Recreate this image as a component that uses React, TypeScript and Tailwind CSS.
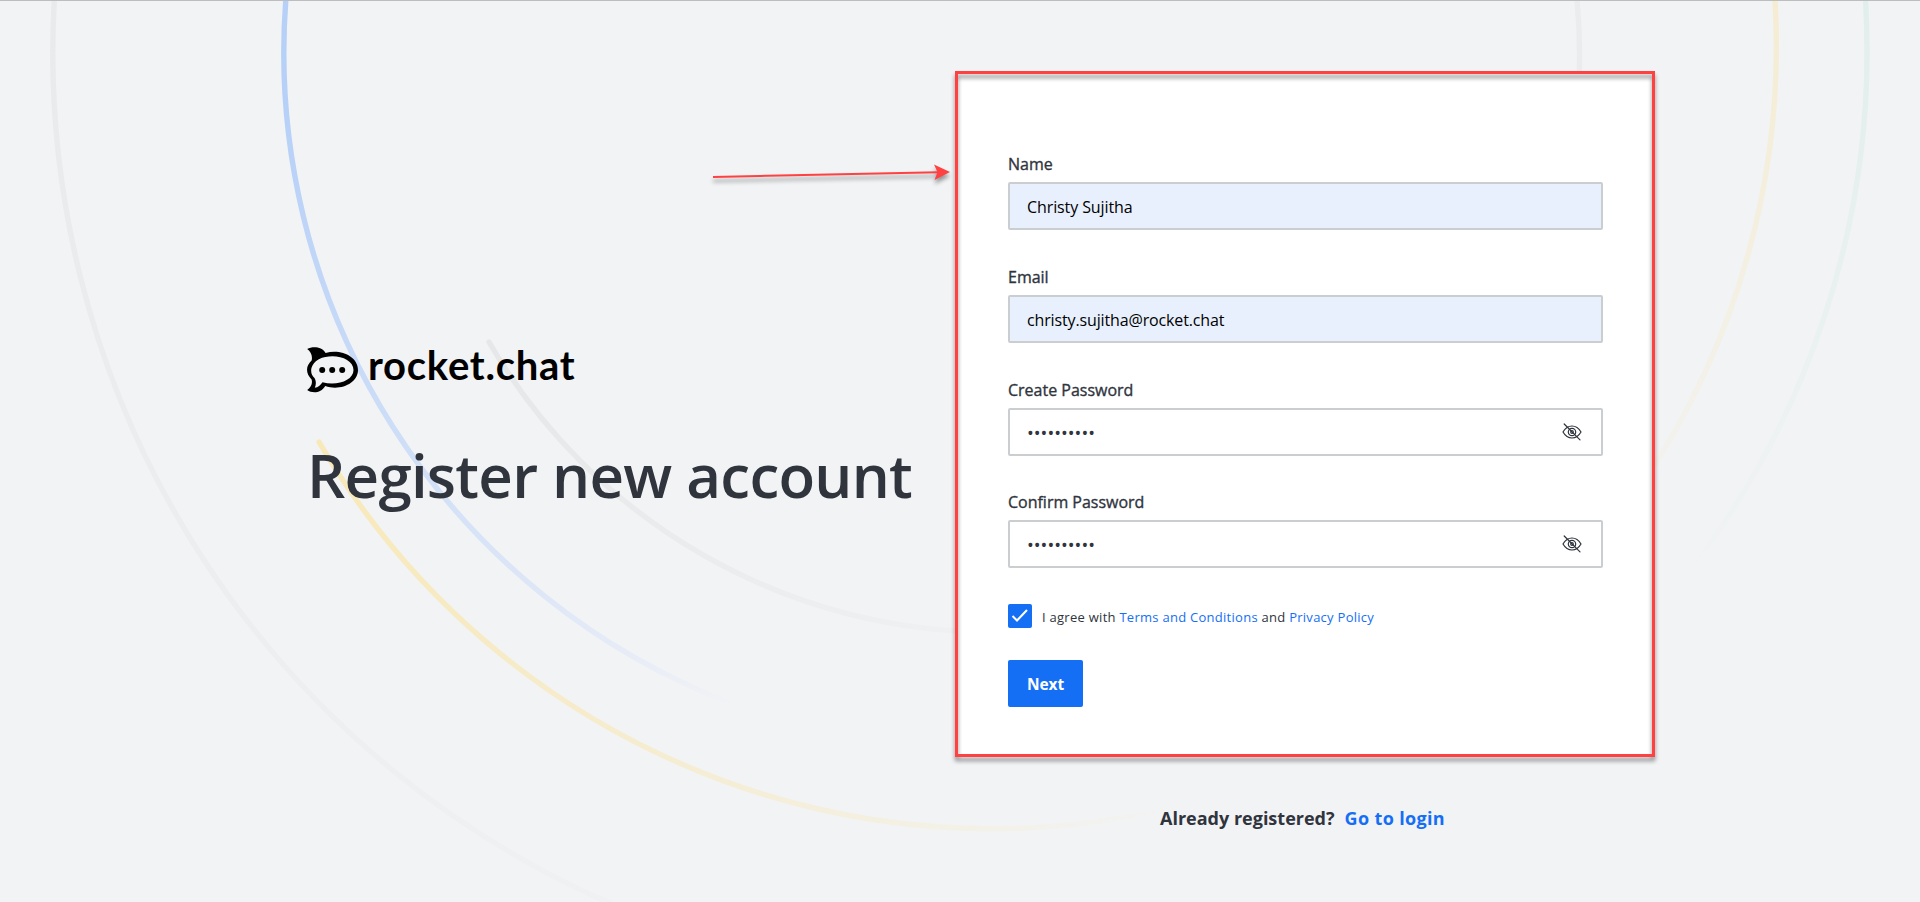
import React from "react";

function Rings() {
  return (
    <svg className="absolute inset-0" width="1920" height="902" viewBox="0 0 1920 902" fill="none" strokeWidth="5.4" strokeLinecap="round">
      <defs>
        <linearGradient id="blue" gradientUnits="userSpaceOnUse" x1="284" y1="100" x2="734" y2="704">
          <stop offset="0" stopColor="#b6d0f8" />
          <stop offset="0.55" stopColor="#d3e1f7" />
          <stop offset="0.85" stopColor="#e6ebf7" />
          <stop offset="1" stopColor="#f2f3f5" />
        </linearGradient>
        <linearGradient id="yellow" gradientUnits="userSpaceOnUse" x1="319" y1="442" x2="1180" y2="800">
          <stop offset="0" stopColor="#f8e9b9" />
          <stop offset="0.5" stopColor="#f5edd3" />
          <stop offset="1" stopColor="#f2f3f4" />
        </linearGradient>
        <linearGradient id="yellowRight" gradientUnits="userSpaceOnUse" x1="1776" y1="0" x2="1640" y2="490">
          <stop offset="0" stopColor="#f5ecd2" />
          <stop offset="1" stopColor="#f2f2f0" />
        </linearGradient>
        <linearGradient id="green" gradientUnits="userSpaceOnUse" x1="1866" y1="0" x2="1670" y2="600">
          <stop offset="0" stopColor="#e1efec" />
          <stop offset="1" stopColor="#f2f3f5" />
        </linearGradient>
        <linearGradient id="outer" gradientUnits="userSpaceOnUse" x1="53" y1="0" x2="620" y2="930">
          <stop offset="0" stopColor="#e9eaec" />
          <stop offset="1" stopColor="#f0f1f3" />
        </linearGradient>
        <linearGradient id="inner" gradientUnits="userSpaceOnUse" x1="489" y1="342" x2="1000" y2="640">
          <stop offset="0" stopColor="#e6e7e9" />
          <stop offset="1" stopColor="#f0f1f3" />
        </linearGradient>
      </defs>
      <path d="M54.3 0A928 928 0 0 0 636 914" stroke="url(#outer)" />
      <path d="M285.8 0A697 697 0 0 0 733 704" stroke="url(#blue)" />
      <path d="M489 342A582 582 0 0 0 997 632" stroke="url(#inner)" />
      <path d="M319 442A780 780 0 0 0 1250 785" stroke="url(#yellow)" />
      <path d="M1775 0A781 781 0 0 1 1640 487" stroke="url(#yellowRight)" />
      <path d="M1865.5 0A850 850 0 0 1 1670 595" stroke="url(#green)" />
      <path d="M1577 0A582 582 0 0 1 1579 80" stroke="#ebecee" />
    </svg>
  );
}

function Bubble() {
  return (
    <svg width="52" height="46" viewBox="0 0 52 46">
      <path
        fillRule="evenodd"
        d="M0.2 2C5 -0.6 14.5 -1 18.6 6C33 1.500 51 9 51 23C51 36.500 33 44.300 18.200 39C14 46.500 5 46.500 0.200 43C4 40 5.800 36.500 4.600 32.500C-1.500 26.500 -1.500 19 4.600 13.500C5.800 9.500 4 4.500 0.200 2ZM11.800 12.200C2.500 17.500 2.500 27 7.500 31C9.500 34.500 9 38 7.800 40.800C11 40.500 13.500 38 15.500 35.300C30 39.300 46.500 33.500 46.500 23C46.500 11 26 5.500 11.800 12.200Z"
        fill="#000"
      />
      <circle cx="15.200" cy="23" r="3" />
      <circle cx="25.200" cy="23" r="3" />
      <circle cx="35.200" cy="23" r="3" />
    </svg>
  );
}

function EyeOff() {
  return (
    <svg width="20" height="20" viewBox="0 0 20 20" fill="none" stroke="#2f343d" strokeWidth="1.200" strokeLinecap="round">
      <path d="M1 10C3.200 6.200 6.500 4 10 4S16.800 6.200 19 10C16.800 13.800 13.500 16 10 16S3.200 13.800 1 10Z" />
      <circle cx="10" cy="10" r="3.700" />
      <circle cx="10" cy="10" r="1.300" />
      <path d="M2.200 2L18 17.800" />
    </svg>
  );
}

const fields = [
  { label: "Name", value: "Christy Sujitha", auto: true, height: "h-[113px]", valueClass: "text-[16px] tracking-[-0.1px]" },
  { label: "Email", value: "christy.sujitha@rocket.chat", auto: true, height: "h-[113px]", valueClass: "text-[16px] tracking-[-0.14px]" },
  { label: "Create Password", value: "••••••••••", auto: false, height: "h-[112px]", valueClass: "text-[18px] tracking-[0.03px]" },
  { label: "Confirm Password", value: "••••••••••", auto: false, height: "h-[112px]", valueClass: "text-[18px] tracking-[0.03px]" },
];

function Field({ field }: { field: (typeof fields)[number] }) {
  return (
    <div className={`flex flex-col ${field.height}`}>
      <label className="mb-[8px] flex h-[19px] items-center">
        <span className="-mt-[2px] text-[16px] leading-5 font-medium tracking-[-0.01px] whitespace-nowrap text-[#2f343d] [-webkit-text-stroke:0.35px_#2f343d]">{field.label}</span>
      </label>
      <div className={`flex h-12 items-center justify-between rounded-[2px] border-2 border-[#cbced1] pr-[19px] pl-[17px] ${field.auto ? "bg-[#e8f0fe] pt-[2px]" : "bg-white"}`}>
        <span className={`leading-5 whitespace-nowrap ${field.auto ? "text-black" : "pt-px text-[#2f343d]"} ${field.valueClass}`}>{field.value}</span>
        {!field.auto && <EyeOff />}
      </div>
    </div>
  );
}

function Arrow() {
  return (
    <svg className="absolute top-[150px] left-[700px] drop-shadow-[0_4px_2px_rgba(0,0,0,0.400)]" width="255" height="50" viewBox="0 0 255 50">
      <path d="M13 27L238 22.300" stroke="#ff4141" strokeWidth="2" />
      <path d="M250 22L234 14.500L237.500 22.300L234.500 30Z" fill="#ff4141" />
    </svg>
  );
}

export default function App() {
  return (
    <div className="relative h-[902px] w-[1920px] overflow-hidden border-t border-[#bcbdbf] bg-[#f2f3f5] font-['Open_Sans','Noto_Sans',sans-serif] text-[#2f343d]">
      <div className="absolute inset-0 -top-px">
        <Rings />
      </div>
      <div className="relative flex">
        <section className="w-[955px] pt-[346px] pl-[307px]">
          <div className="flex h-[46px]">
            <Bubble />
            <span className="ml-[9px] font-['Lato',sans-serif] text-[40px] leading-[37px] font-bold tracking-[0.750px] whitespace-nowrap text-black">rocket.chat</span>
          </div>
          <h1 className="mt-[47px] text-[60px] leading-[70px] font-semibold tracking-[-0.750px] whitespace-nowrap">Register new account</h1>
        </section>
        <main className="w-[700px] pt-[70px]">
          <div className="relative h-[686px] bg-white pt-[84px] pr-[52px] pl-[53px]">
            <div className="flex flex-col">
              {fields.map((f) => (
                <Field key={f.label} field={f} />
              ))}
            </div>
            <div className="mt-[-1px] flex h-6 items-center">
              <span className="flex size-6 items-center justify-center rounded-[2px] bg-[#156ff5]">
                <svg width="18" height="16" viewBox="0 0 18 16" fill="none" stroke="#fff" strokeWidth="2">
                  <path d="M1.500 8L6 12.500L16 2" />
                </svg>
              </span>
              <span className="ml-[10px] pt-[3px] text-[13px] tracking-[0.270px] whitespace-nowrap">
                I agree with <a className="text-[#156ff5]">Terms and Conditions</a> and <a className="text-[#156ff5]">Privacy Policy</a>
              </span>
            </div>
            <button className="mt-8 flex h-[47px] w-[75px] items-center justify-center rounded-[2px] bg-[#156ff5] pt-[2px] text-[15.500px] font-bold tracking-[-0.100px] text-white">Next</button>
            <div className="absolute inset-0 border-[3px] border-[#ff4141] drop-shadow-[0_4px_2px_rgba(0,0,0,0.450)]" />
          </div>
          <p className="mt-[47px] flex gap-[10px] pl-[205px] text-[18px] leading-[28px] font-bold whitespace-nowrap">
            <span>Already registered?</span>
            <a className="tracking-[0.350px] text-[#156ff5]">Go to login</a>
          </p>
        </main>
      </div>
      <div className="absolute inset-0 -top-px">
        <Arrow />
      </div>
    </div>
  );
}
